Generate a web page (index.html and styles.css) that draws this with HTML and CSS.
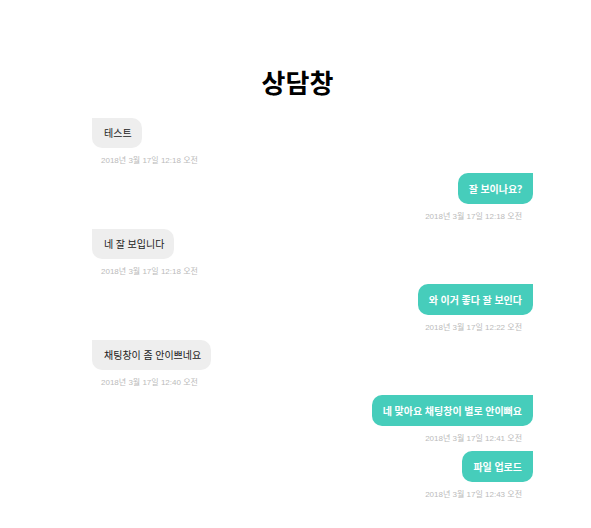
FILE: index.html
```html
<!DOCTYPE html>
<html lang="ko">
<head>
<meta charset="utf-8">
<title>상담창</title>
<link rel="stylesheet" href="styles.css">
</head>
<body>
<main class="chat">
<h1 class="title">상담창</h1>
<ol class="messages">
<li class="message"><p class="bubble">테스트</p><time class="time">2018년 3월 17일 12:18 오전</time></li>
<li class="message mine"><p class="bubble">잘 보이나요?</p><time class="time">2018년 3월 17일 12:18 오전</time></li>
<li class="message"><p class="bubble">네 잘 보입니다</p><time class="time">2018년 3월 17일 12:18 오전</time></li>
<li class="message mine"><p class="bubble">와 이거 좋다 잘 보인다</p><time class="time">2018년 3월 17일 12:22 오전</time></li>
<li class="message"><p class="bubble">채팅창이 좀 안이쁘네요</p><time class="time">2018년 3월 17일 12:40 오전</time></li>
<li class="message mine"><p class="bubble">네 맞아요 채팅창이 별로 안이뻐요</p><time class="time">2018년 3월 17일 12:41 오전</time></li>
<li class="message mine"><p class="bubble">파일 업로드</p><time class="time">2018년 3월 17일 12:43 오전</time></li>
</ol>
</main>
</body>
</html>
```
FILE: styles.css
```css
* { box-sizing: border-box; }
body {
  margin: 0;
  background: #fff;
  color: #222;
  font-family: "Noto Sans", "Noto Sans CJK KR", sans-serif;
}
.chat { padding: 64px 58px 0 92px; }
.title {
  margin: 0 0 16px;
  padding-right: 30px;
  color: #000;
  font-size: 26px;
  font-weight: 700;
  line-height: 38px;
  text-align: center;
}
.messages {
  display: flex;
  flex-direction: column;
  margin: 0;
  padding: 0;
  list-style: none;
}
.message {
  display: flex;
  flex-direction: column;
  align-items: flex-start;
}
.bubble {
  margin: 0;
  padding: 7px 10px 7px 12px;
  border-radius: 0 10px 10px 10px;
  background: #eee;
  font-size: 10px;
  line-height: 16px;
}
.time {
  padding: 5px 11px 4px 9px;
  color: #bbb;
  font-family: "Liberation Sans", "Noto Sans CJK KR", sans-serif;
  font-size: 8px;
  line-height: 16px;
}
.mine { align-items: flex-end; }
.mine .bubble {
  padding: 8px 11px 7px;
  border-radius: 10px 0 10px 10px;
  background: #46cdbb;
  color: #fff;
  font-weight: 700;
}
```
